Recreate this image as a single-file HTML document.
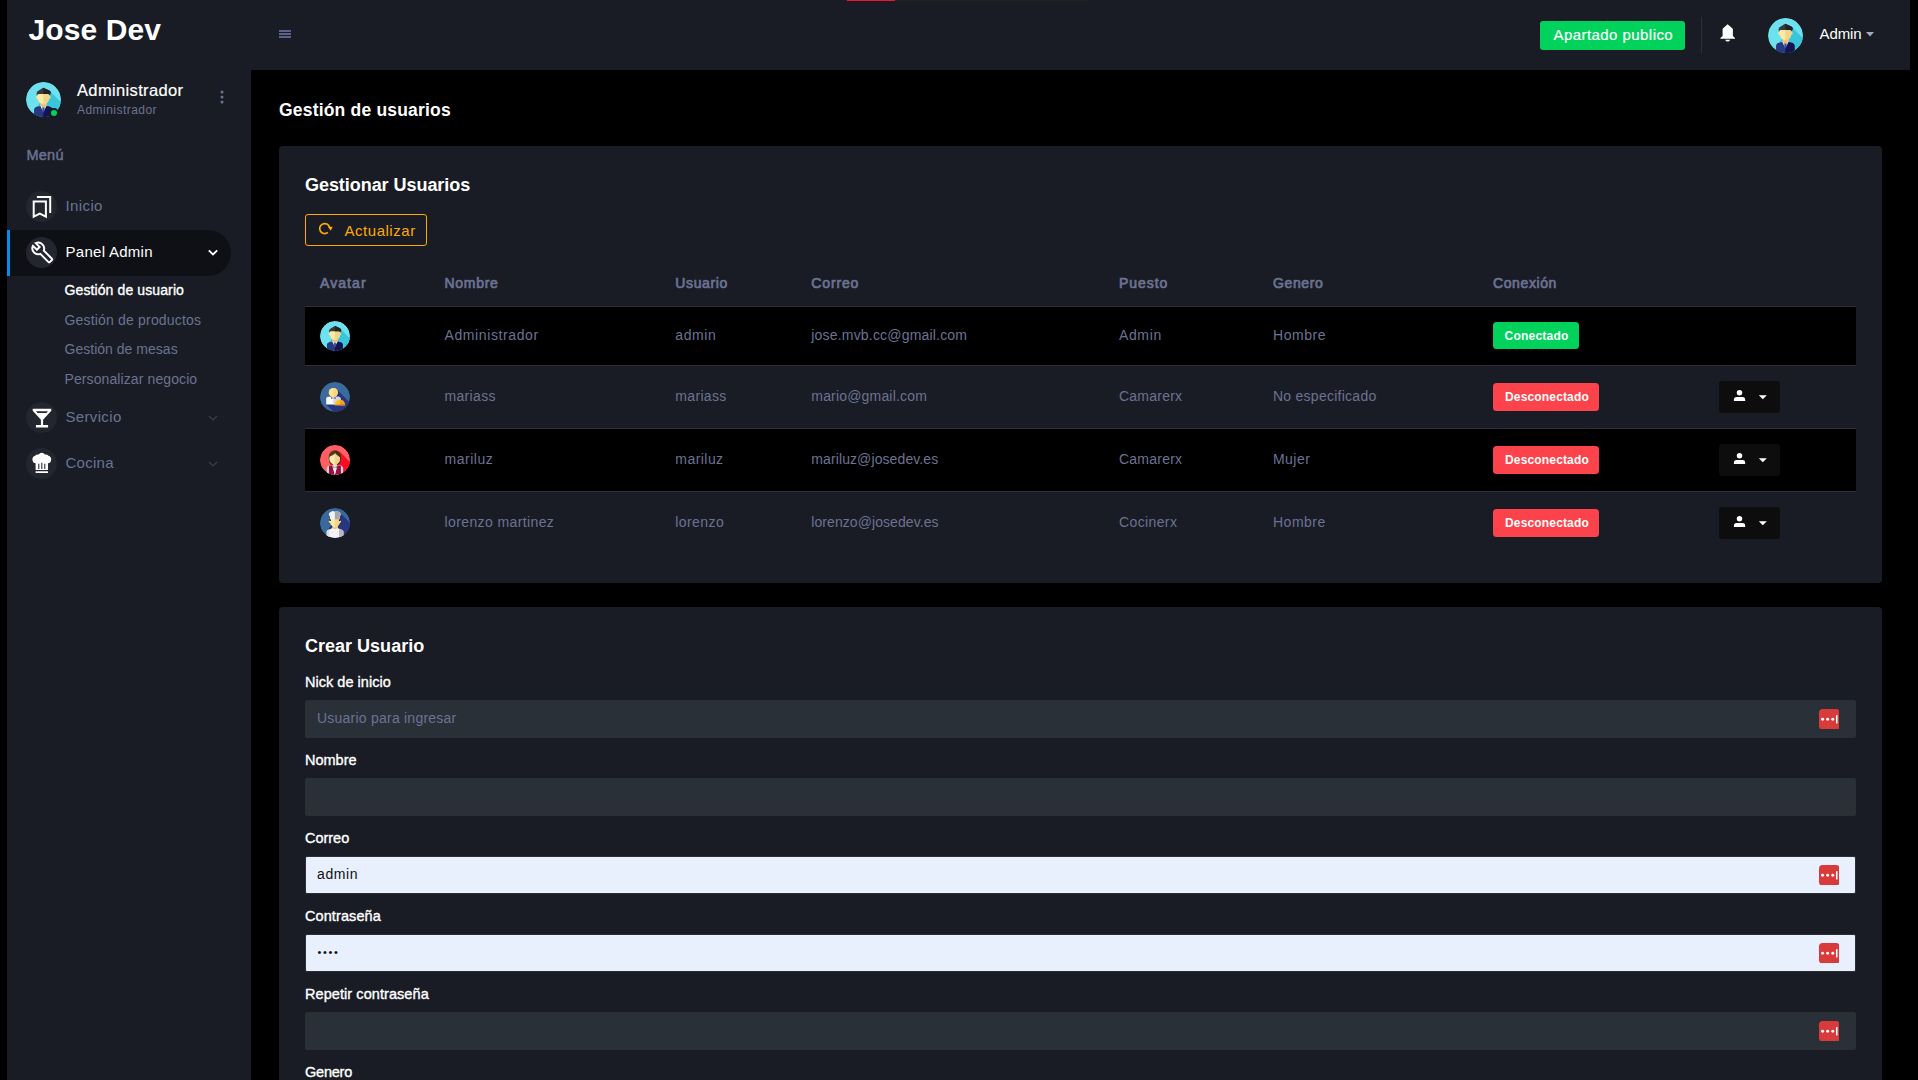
<!DOCTYPE html>
<html lang="es">
<head>
<meta charset="utf-8">
<title>Jose Dev - Gestión de usuarios</title>
<style>
*{box-sizing:border-box;margin:0;padding:0}
html,body{width:1918px;height:1080px;overflow:hidden;background:#000}
body{font-family:"Liberation Sans",sans-serif;font-size:14px;color:#fff;position:relative}
a{color:inherit;text-decoration:none}
ul{list-style:none}
.abs{position:absolute}
.t{position:absolute;white-space:nowrap;line-height:1}
.muted{color:#6c7293}
/* ---------- top progress ---------- */
#pbar{position:absolute;left:847px;top:0;width:242px;height:1px;background:#24221f;z-index:9}
#pbar i{display:block;width:48px;height:1px;background:#f0142f}
/* ---------- sidebar ---------- */
#sidebar{position:absolute;left:7px;top:0;width:244px;height:1080px;background:#191c24}
.brand{font-size:30px;font-weight:700;color:#fff}
.avatar{position:absolute;border-radius:50%;overflow:hidden}
.avatar svg{display:block;width:100%;height:100%}
.dot{position:absolute;left:42px;top:108px;width:10px;height:10px;border-radius:50%;background:#00d25b;border:2px solid #191c24}
.navtitle{font-size:14.500px;font-weight:400;color:#6c7293;-webkit-text-stroke:.45px #6c7293}
.nav-item{position:absolute;left:0;width:224px;height:46px}
.nav-item.active{background:#0f1015;border-radius:0 100px 100px 0}
.nav-item.active:before{content:"";position:absolute;left:0;top:0;width:3px;height:46px;background:#0090e7}
.nav-item .ic{position:absolute;left:19px;top:7.500px;width:31px;height:31px;border-radius:50%;background:#23252f}
.nav-item .ic svg{position:absolute;left:0;top:0;width:31px;height:31px}
.nav-item .lbl{position:absolute;left:58.500px;top:14.500px;font-size:15px;line-height:1;color:#6c7293;white-space:nowrap}
.nav-item.active .lbl{color:#fff}
.nav-item .arrow{position:absolute;left:200px;top:18.700px;width:12px;height:10px}
.sub{position:absolute;left:57.500px;font-size:14px;line-height:1;color:#6c7293;white-space:nowrap}
.sub.on{color:#fff;-webkit-text-stroke:.35px #fff}
/* ---------- navbar ---------- */
#navbar{position:absolute;left:251px;top:0;width:1659px;height:70px;background:#191c24}
.btn-public{position:absolute;left:1289px;top:21px;width:145px;height:29px;border-radius:3px;background:#00d25b;color:#fff;font-size:15px}
.btn-public span{position:absolute;left:13.500px;top:5.500px;-webkit-text-stroke:.2px #fff;line-height:1;white-space:nowrap}
.vdiv{position:absolute;left:1450px;top:17px;width:1px;height:36px;background:#2c2e33}
/* ---------- main ---------- */
#main{position:absolute;left:251px;top:70px;width:1667px;height:1010px;background:#000}
.card{position:absolute;left:28px;width:1603px;background:#191c24;border-radius:4px}
h3.page{position:absolute;left:28px;top:32px;font-size:17.500px;line-height:1;font-weight:700;white-space:nowrap}
h4.ct{position:absolute;left:26px;font-size:18px;line-height:1;font-weight:700;white-space:nowrap}
.btn-upd{position:absolute;left:26px;top:68px;width:122px;height:32px;border:1px solid #ffab00;border-radius:3px;color:#ffab00;font-size:15px}
.btn-upd span{position:absolute;left:38.500px;top:8px;line-height:1;white-space:nowrap}
.btn-upd svg{position:absolute;left:12px;top:7px;width:16px;height:14px}
/* table */
table{position:absolute;left:26px;top:114px;width:1551px;border-collapse:collapse;table-layout:fixed}
th{height:46px;text-align:left;padding:1px 0 0 15px;font-size:14px;font-weight:400;-webkit-text-stroke:.7px #6c7293;color:#6c7293;border-bottom:1px solid #2c2e33;white-space:nowrap}
td{padding:0 0 0 15px;font-size:14px;color:#6c7293;border-top:1px solid #2c2e33;white-space:nowrap;vertical-align:middle}
td.x{padding-bottom:2px}
tr.r1 td{height:59px}
tr.rn td{height:63px}
tr.odd td{background:#000}
td .av{position:relative;display:block;width:30px;height:30px;border-radius:50%;overflow:hidden}
td .av svg{display:block;width:30px;height:30px}
.badge{display:block;border-radius:3.500px;font-size:12px;font-weight:700;color:#fff;line-height:1;position:relative}
.badge b{position:absolute;top:8px;white-space:nowrap}
.badge.ok{background:#00d25b;width:86px;height:27px}
.badge.off{background:#fc424a;width:106px;height:28px}
.dd{position:relative;display:block;width:61px;height:32px;border-radius:3px;background:#0d0d0d}
.dd svg{position:absolute;left:0;top:0;width:61px;height:32px}
/* form */
label{position:absolute;left:26px;font-size:14.500px;line-height:1;color:#fff;white-space:nowrap;-webkit-text-stroke:.35px #fff}
.inp{position:absolute;left:26px;width:1551px;height:38px;border-radius:2px;background:#2a3038;border:1px solid #2c2e33;font-size:14px}
.inp.af{background:#e8f0fe;color:#111}
.inp span{position:absolute;left:11px;top:10px;line-height:1;white-space:nowrap}
.lp{position:absolute;left:1512.800px;top:7.800px;width:20.600px;height:20.600px}
/* LS-BEGIN */
#t-brand{letter-spacing:0.11px}
#t-pname{letter-spacing:0.35px}
#t-prole{letter-spacing:0.46px}
#t-menu{letter-spacing:0.24px}
#t-n1{letter-spacing:0.39px}
#t-n2{letter-spacing:0.28px}
#t-n3{letter-spacing:0.34px}
#t-n4{letter-spacing:0.26px}
#t-s1{letter-spacing:0.11px}
#t-s2{letter-spacing:0.18px}
#t-s3{letter-spacing:0.02px}
#t-s4{letter-spacing:0.10px}
#t-pub{letter-spacing:0.44px}
#t-admin{letter-spacing:-0.08px}
#t-page{letter-spacing:0.19px}
#t-c1{letter-spacing:-0.05px}
#t-upd{letter-spacing:0.53px}
#h1{letter-spacing:1.08px}
#h2{letter-spacing:0.70px}
#h3{letter-spacing:0.64px}
#h4{letter-spacing:0.86px}
#h5{letter-spacing:0.96px}
#h6{letter-spacing:0.62px}
#h7{letter-spacing:0.61px}
#a2{letter-spacing:0.60px}
#a3{letter-spacing:0.61px}
#a4{letter-spacing:0.19px}
#a5{letter-spacing:0.63px}
#a6{letter-spacing:0.54px}
#a7{letter-spacing:0.24px}
#b2{letter-spacing:0.33px}
#b3{letter-spacing:0.33px}
#b4{letter-spacing:0.18px}
#b5{letter-spacing:0.23px}
#b6{letter-spacing:0.26px}
#b7{letter-spacing:0.16px}
#c2{letter-spacing:0.53px}
#c3{letter-spacing:0.45px}
#c4{letter-spacing:0.10px}
#c5{letter-spacing:0.23px}
#c6{letter-spacing:0.45px}
#c7{letter-spacing:0.16px}
#d2{letter-spacing:0.39px}
#d3{letter-spacing:0.41px}
#d4{letter-spacing:0.07px}
#d5{letter-spacing:0.38px}
#d6{letter-spacing:0.50px}
#d7{letter-spacing:0.16px}
#t-c2{letter-spacing:0.01px}
#l1{letter-spacing:0.03px}
#t-ph{letter-spacing:0.23px}
#l3{letter-spacing:-0.02px}
#t-v1{letter-spacing:0.63px}
#l4{letter-spacing:0.09px}
#l2{letter-spacing:-0.01px}
#l5{letter-spacing:0.07px}
#l6{letter-spacing:-0.23px}
/* LS-END */
</style>
</head>
<body>
<div id="pbar"><i></i></div>

<!-- ================= SIDEBAR ================= -->
<nav id="sidebar">
  <a class="t brand" id="t-brand" style="left:21.500px;top:15px" href="#">Jose Dev</a>
  <div class="avatar" style="left:19px;top:82px;width:35px;height:35px"><svg viewBox="0 0 40 40"><use href="#av-admin"/></svg></div>
  <span class="dot"></span>
  <div class="t" id="t-pname" style="left:70px;top:81.500px;font-size:16.500px;-webkit-text-stroke:.2px #fff">Administrador</div>
  <div class="t muted" id="t-prole" style="left:70px;top:104px;font-size:12px">Administrador</div>
  <svg class="abs" style="left:212px;top:89px;width:6px;height:16px" viewBox="0 0 6 16"><circle cx="3" cy="3" r="1.500" fill="#6c7293"/><circle cx="3" cy="8" r="1.500" fill="#6c7293"/><circle cx="3" cy="13" r="1.500" fill="#6c7293"/></svg>
  <div class="t navtitle" id="t-menu" style="left:19.500px;top:147.500px">Menú</div>
  <ul>
    <li class="nav-item" style="top:183.500px"><span class="ic"><svg viewBox="0 0 31 31"><use href="#ic-bookmarks"/></svg></span><span class="lbl" id="t-n1">Inicio</span></li>
    <li class="nav-item active" style="top:229.600px"><span class="ic"><svg viewBox="0 0 31 31"><use href="#ic-wrench"/></svg></span><span class="lbl" id="t-n2">Panel Admin</span><svg class="arrow" viewBox="0 0 12 10"><path d="M1.800 2.300l4.200 4.200 4.200-4.200" fill="none" stroke="#fff" stroke-width="1.800"/></svg></li>
    <li class="nav-item" style="top:394.400px"><span class="ic"><svg viewBox="0 0 31 31"><use href="#ic-glass"/></svg></span><span class="lbl" id="t-n3">Servicio</span><svg class="arrow" viewBox="0 0 12 10"><path d="M2 3l4 4 4-4" fill="none" stroke="#3b3f52" stroke-width="1.100"/></svg></li>
    <li class="nav-item" style="top:440.300px"><span class="ic"><svg viewBox="0 0 31 31"><use href="#ic-chef"/></svg></span><span class="lbl" id="t-n4">Cocina</span><svg class="arrow" viewBox="0 0 12 10"><path d="M2 3l4 4 4-4" fill="none" stroke="#3b3f52" stroke-width="1.100"/></svg></li>
  </ul>
  <a class="sub on" id="t-s1" style="top:282.800px" href="#">Gestión de usuario</a>
  <a class="sub" id="t-s2" style="top:312.600px" href="#">Gestión de productos</a>
  <a class="sub" id="t-s3" style="top:342px" href="#">Gestión de mesas</a>
  <a class="sub" id="t-s4" style="top:371.700px" href="#">Personalizar negocio</a>
</nav>

<!-- ================= NAVBAR ================= -->
<header id="navbar">
  <svg class="abs" style="left:28px;top:30px;width:12px;height:8px" viewBox="0 0 12 8"><path d="M0 1h12M0 4h12M0 7h12" stroke="#5e6187" stroke-width="2"/></svg>
  <a class="btn-public" href="#"><span id="t-pub">Apartado publico</span></a>
  <span class="vdiv"></span>
  <svg class="abs" style="left:1468.600px;top:23.600px;width:15.400px;height:18px" preserveAspectRatio="none" viewBox="0 0 16 18"><use href="#ic-bell"/></svg>
  <div class="avatar" style="left:1517px;top:18px;width:35px;height:35px"><svg viewBox="0 0 40 40"><use href="#av-admin"/></svg></div>
  <div class="t" id="t-admin" style="left:1568.500px;top:26.200px;font-size:15px">Admin</div>
  <svg class="abs" style="left:1615px;top:32px;width:8px;height:4.500px" viewBox="0 0 8 4.500"><path d="M0 0h8l-4 4.500z" fill="#a3a8bd"/></svg>
</header>

<!-- ================= MAIN ================= -->
<main id="main">
  <h3 class="page" id="t-page">Gestión de usuarios</h3>

  <section class="card" id="card1" style="top:76px;height:437px">
    <h4 class="ct" id="t-c1" style="top:29.500px">Gestionar Usuarios</h4>
    <a class="btn-upd" href="#"><svg viewBox="0 0 16 14"><use href="#ic-refresh"/></svg><span id="t-upd">Actualizar</span></a>
    <table>
      <colgroup><col style="width:124.500px"><col style="width:230.800px"><col style="width:136px"><col style="width:307.700px"><col style="width:154px"><col style="width:220px"><col style="width:226px"><col></colgroup>
      <thead><tr><th><span id="h1">Avatar</span></th><th><span id="h2">Nombre</span></th><th><span id="h3">Usuario</span></th><th><span id="h4">Correo</span></th><th><span id="h5">Puesto</span></th><th><span id="h6">Genero</span></th><th><span id="h7">Conexión</span></th><th></th></tr></thead>
      <tbody>
        <tr class="r1 odd"><td><span class="av"><svg viewBox="0 0 40 40"><use href="#av-admin"/></svg></span></td><td class="x"><span id="a2">Administrador</span></td><td class="x"><span id="a3">admin</span></td><td class="x"><span id="a4">jose.mvb.cc@gmail.com</span></td><td class="x"><span id="a5">Admin</span></td><td class="x"><span id="a6">Hombre</span></td><td><span class="badge ok"><b id="a7" style="left:11.500px">Conectado</b></span></td><td></td></tr>
        <tr class="rn"><td><span class="av"><svg viewBox="0 0 40 40"><use href="#av-waiter"/></svg></span></td><td class="x"><span id="b2">mariass</span></td><td class="x"><span id="b3">mariass</span></td><td class="x"><span id="b4">mario@gmail.com</span></td><td class="x"><span id="b5">Camarerx</span></td><td class="x"><span id="b6">No especificado</span></td><td><span class="badge off"><b id="b7" style="left:12px">Desconectado</b></span></td><td><span class="dd"><svg viewBox="0 0 61 32"><use href="#dd-ic"/></svg></span></td></tr>
        <tr class="rn odd"><td><span class="av"><svg viewBox="0 0 40 40"><use href="#av-woman"/></svg></span></td><td class="x"><span id="c2">mariluz</span></td><td class="x"><span id="c3">mariluz</span></td><td class="x"><span id="c4">mariluz@josedev.es</span></td><td class="x"><span id="c5">Camarerx</span></td><td class="x"><span id="c6">Mujer</span></td><td><span class="badge off"><b id="c7" style="left:12px">Desconectado</b></span></td><td><span class="dd"><svg viewBox="0 0 61 32"><use href="#dd-ic"/></svg></span></td></tr>
        <tr class="rn"><td><span class="av"><svg viewBox="0 0 40 40"><use href="#av-cook"/></svg></span></td><td class="x"><span id="d2">lorenzo martinez</span></td><td class="x"><span id="d3">lorenzo</span></td><td class="x"><span id="d4">lorenzo@josedev.es</span></td><td class="x"><span id="d5">Cocinerx</span></td><td class="x"><span id="d6">Hombre</span></td><td><span class="badge off"><b id="d7" style="left:12px">Desconectado</b></span></td><td><span class="dd"><svg viewBox="0 0 61 32"><use href="#dd-ic"/></svg></span></td></tr>
      </tbody>
    </table>
  </section>

  <section class="card" id="card2" style="top:537px;height:480px;border-radius:4px 4px 0 0">
    <h4 class="ct" id="t-c2" style="top:30px">Crear Usuario</h4>
    <label id="l1" style="top:67.500px">Nick de inicio</label>
    <div class="inp" style="top:93px"><span class="muted" id="t-ph">Usuario para ingresar</span><svg class="lp" viewBox="0 0 20 20"><use href="#lp-ic"/></svg></div>
    <label id="l2" style="top:145.500px">Nombre</label>
    <div class="inp" style="top:171px"></div>
    <label id="l3" style="top:223.500px">Correo</label>
    <div class="inp af" style="top:249px"><span id="t-v1">admin</span><svg class="lp" viewBox="0 0 20 20"><use href="#lp-ic"/></svg></div>
    <label id="l4" style="top:301.500px">Contraseña</label>
    <div class="inp af" style="top:327px"><span id="t-v2" style="font-size:11px;top:11.500px;left:11.400px;letter-spacing:1.650px">••••</span><svg class="lp" viewBox="0 0 20 20"><use href="#lp-ic"/></svg></div>
    <label id="l5" style="top:379.500px">Repetir contraseña</label>
    <div class="inp" style="top:405px"><svg class="lp" viewBox="0 0 20 20"><use href="#lp-ic"/></svg></div>
    <label id="l6" style="top:457.500px">Genero</label>
  </section>
</main>

<!-- ================= SVG DEFS (icons / avatars) ================= -->
<svg width="0" height="0" style="position:absolute">
  <defs>
    <g id="lp-ic"><rect width="20" height="20" rx="3.400" fill="#d83b3a"/><circle cx="3.500" cy="10" r="1.450" fill="#fff"/><circle cx="8.400" cy="10" r="1.450" fill="#fff"/><circle cx="13.400" cy="10" r="1.450" fill="#fff"/><rect x="16.500" y="6" width="1.500" height="8" fill="#fff"/></g>
    <g id="dd-ic"><circle cx="20.500" cy="11.700" r="2.750" fill="#fff"/><path d="M14.900 20.100v-1.400a2.700 2.700 0 0 1 2.700-2.700h5.900a2.700 2.700 0 0 1 2.700 2.700v1.400z" fill="#fff"/><path d="M39.800 14.300h8l-4 3.900z" fill="#fff"/></g>
    <g id="ic-bookmarks"><path d="M7.700 10.600h12.200v15l-6.100-2.900-6.100 2.900z" fill="none" stroke="#fff" stroke-width="2" stroke-linejoin="miter"/><path d="M10.900 6h13.300v16.100" fill="none" stroke="#fff" stroke-width="2"/></g>
    <g id="ic-wrench"><path d="M22.700 19l-9.100-9.100c.9-2.300.4-5-1.500-6.900-2-2-5-2.400-7.400-1.300L9 6 6 9 1.600 4.700C.4 7.100.9 10.100 2.900 12.100c1.900 1.900 4.600 2.400 6.900 1.500l9.100 9.100c.4.400 1 .4 1.400 0l2.300-2.300c.5-.4.5-1.100.1-1.400z" fill="none" stroke="#fff" stroke-width="2.200" transform="translate(5.500 4.650) scale(.9)"/></g>
    <g id="ic-glass"><path d="M6.700 6.800h18.600v2l-8.200 9v5.300h5v2.300H9.900v-2.300h5v-5.300l-8.200-9z" fill="#fff"/><path d="M10 9.200h12l-1.600 1.800h-8.800z" fill="#23252f"/></g>
    <g id="ic-chef" transform="translate(-1.100 -1.300) scale(1.070)"><path d="M10 23h11.600v1.600H10zM10 21.800v-6.300a3.600 3.600 0 0 1-.4-7 3.200 3.200 0 0 1 3.300-1.100 3.300 3.300 0 0 1 5.800 0 3.200 3.200 0 0 1 3.300 1.100 3.600 3.600 0 0 1-.4 7v6.300z" fill="#fff"/><path d="M13 16v4.800M15.800 15v5.800M18.600 16v4.800" stroke="#23252f" stroke-width="1"/></g>
    <g id="ic-bell"><path d="M7.800.2C9.300 1.600 12.200 3 13.400 5v7.100l2.300 2v.7H.4v-.7l2.300-2V5C3.900 3 6.800 1.600 7.800.2z" fill="#fff"/><path d="M5.600 15.700h4.700c0 1.100-1 1.900-2.350 1.900s-2.350-.8-2.350-1.900z" fill="#fff"/></g>
    <g id="ic-refresh"><path d="M9.900 10.400A5 5 0 1 1 11.500 5.300" fill="none" stroke="#ffab00" stroke-width="1.700"/><path d="M10 5.100l4.700-.4-1.900 4.100z" fill="#ffab00"/></g>
    <clipPath id="rh"><rect x="19.800" y="0" width="21" height="40"/></clipPath>
    <g id="av-admin"><circle cx="20" cy="20" r="20" fill="#6de1ee"/><path d="M27.500 10.700L42 25.200V42H20L10 31z" fill="#3ac6da"/><path d="M9.200 40v-8c0-2 1.300-3.300 4.300-3.900l3-.8h6.600l3 .8c3 .6 4.300 1.900 4.300 3.900v8z" fill="#27397f"/><path d="M9.200 40v-8c0-2 1.300-3.300 4.300-3.900l3-.8h6.600l3 .8c3 .6 4.300 1.900 4.300 3.900v8z" fill="#141452" clip-path="url(#rh)"/><path d="M16 26.600l3.800 8.100 4-8.100z" fill="#e3eaf0"/><path d="M18.900 28.200h2.100l.3 4.300-1.400 2.600-1.300-2.600z" fill="#2d4fa0"/><path d="M16.700 21h6.800v5.800l-3.400 2.300-3.400-2.300z" fill="#fbd38e"/><path d="M16.700 24.800c2 1.400 4.800 1.400 6.800 0v2l-3.400 2.300-3.400-2.300z" fill="#f5b865"/><circle cx="13.100" cy="17.600" r="1.500" fill="#fee8a6"/><circle cx="26.700" cy="17.600" r="1.500" fill="#f5d488"/><path d="M13.300 12.500h13.200v5.500c0 4.200-3 7.200-6.600 7.200s-6.600-3-6.600-7.200z" fill="#fee8a6"/><path d="M13.300 12.500h13.200v5.500c0 4.200-3 7.200-6.600 7.200s-6.600-3-6.600-7.200z" fill="#f5d488" clip-path="url(#rh)"/><path d="M12.300 15C11.900 12.700 12.400 11.400 13.300 10.600L18.600 7.200Q19.800 6.300 21 7L26.700 9.700C27.800 10.400 28.300 11.300 28.300 12.300C28.300 13.400 27.600 14.200 26.700 14.600L25.600 13.800H14.300Z" fill="#3a3a3a"/><path d="M12.300 15C11.900 12.700 12.400 11.400 13.300 10.600L18.600 7.200Q19.800 6.300 21 7L26.700 9.700C27.800 10.400 28.300 11.300 28.300 12.300C28.300 13.400 27.600 14.200 26.700 14.600L25.600 13.800H14.300Z" fill="#232323" clip-path="url(#rh)"/></g>
    <g id="av-waiter"><circle cx="20" cy="20" r="20" fill="#3b6a9d"/><path d="M22 9.800L42 29.800V42H20.300L8.300 30z" fill="#27367f"/><path d="M8.300 30v-8a2.500 2.500 0 0 1 2.500-2.500h14a2.500 2.500 0 0 1 2.500 2.500v8z" fill="#fff"/><path d="M17.500 19.500h7.300a2.500 2.500 0 0 1 2.500 2.500v8h-9.800z" fill="#d5d8e0"/><circle cx="17.700" cy="14.100" r="6.070" fill="#fde598"/><path d="M17.700 8v12.200a6.070 6.070 0 0 0 0-12.200z" fill="#fdd978"/><path d="M14.700 20.400l3.100 1 3.100-1v2l-3.100-1-3.100 1z" fill="#2a2a33"/><path d="M20.200 29.800a6.400 6.300 0 0 1 12.800 0z" fill="#fdc218"/><path d="M26.600 23.500a6.400 6.300 0 0 1 6.400 6.300h-6.400z" fill="#f0a32b"/><rect x="19.700" y="29.700" width="13.800" height="1.600" fill="#f79420"/><rect x="26.600" y="29.700" width="6.900" height="1.600" fill="#f07c23"/></g>
    <g id="av-woman"><circle cx="20" cy="20" r="20" fill="#fe5f63"/><path d="M26 8.700L42 24.700V42H20L11 30z" fill="#ff0a24"/><path d="M11.700 17c0-6.500 3.300-9.700 8.100-9.700s8.100 3.200 8.100 9.700c0 4-.9 7-2.400 8.800H14.100c-1.500-1.800-2.400-4.800-2.400-8.800z" fill="#5b3a1c"/><path d="M11.700 17c0-6.500 3.300-9.700 8.100-9.700s8.100 3.200 8.100 9.700c0 4-.9 7-2.400 8.800H14.100c-1.500-1.800-2.400-4.800-2.400-8.800z" fill="#4a2d14" clip-path="url(#rh)"/><rect x="17.300" y="23.500" width="5" height="5" fill="#f7d9a0"/><path d="M17.300 25.800c1.500.9 3.500.9 5 0v1.400h-5z" fill="#f3bf72"/><ellipse cx="19.600" cy="18.400" rx="7.100" ry="7.600" fill="#feeaae"/><path d="M19.800 10.800c3.800.1 6.900 3.400 6.900 7.600s-3.100 7.500-6.900 7.600z" fill="#edd28b"/><path d="M12.300 15.500c.4-4.700 3.300-7.200 7.500-7.200 4.400 0 7.300 2.700 7.500 8-2.800-1.400-5.300-3.500-6.700-5.600-2 2.400-5.100 4.100-8.300 4.800z" fill="#5b3a1c"/><path d="M12.300 15.500c.4-4.700 3.300-7.200 7.500-7.200 4.400 0 7.300 2.700 7.500 8-2.800-1.400-5.300-3.500-6.700-5.600-2 2.400-5.100 4.100-8.300 4.800z" fill="#4a2d14" clip-path="url(#rh)"/><path d="M9.200 40v-9c0-2 1.500-3.300 4-3.700h13.600c2.500.4 4 1.700 4 3.700v9z" fill="#c9dbe0"/><path d="M12 40V28l4.500-.7 3.300 12.700 3.300-12.700 4.800.7v12z" fill="#9a0f3f"/><path d="M16.500 27.300h6.600L19.800 40z" fill="#dfeaec"/><path d="M16.700 28.300l3.100 1.100 3.100-1.100v2.500l-3.100-1.100-3.100 1.100z" fill="#6b7a85"/></g>
    <g id="av-cook"><circle cx="20" cy="20" r="20" fill="#3a6a9d"/><path d="M27 6.800L42 21.800V42H20L9 31z" fill="#27367f"/><path d="M8.900 40v-8c0-1.800 1.300-2.900 3.600-3.300l4.200-2.100h6.800l4.200 2.100c2.300.4 3.600 1.500 3.600 3.300v8z" fill="#f4f4f6"/><path d="M25.400 27.700l2.300.9c2.300.4 3.600 1.500 3.600 3.300v8h-5.900z" fill="#b9b9bd"/><path d="M8.900 40v-8c0-1.800 1.300-2.900 3.600-3.300v11.300z" fill="#dcdcdf"/><circle cx="16.600" cy="32.400" r=".6" fill="#c4c4c9"/><circle cx="23.500" cy="32.400" r=".6" fill="#c4c4c9"/><path d="M16.700 20h6.800v6.600l-3.400 1.600-3.400-1.600z" fill="#fde9a4"/><path d="M16.700 20h6.800v6.600l-3.400 1.600-3.400-1.600z" fill="#f2d686" clip-path="url(#rh)"/><path d="M16.700 25c2 1.200 4.800 1.200 6.800 0v1.600l-3.400 1.600-3.400-1.600z" fill="#f3c071"/><circle cx="13.100" cy="18" r="1.500" fill="#fde9a4"/><circle cx="26.700" cy="18" r="1.500" fill="#f2d686"/><path d="M13.400 14h13v4.300c0 3.900-2.900 6.700-6.500 6.700s-6.500-2.800-6.500-6.700z" fill="#fde9a4"/><path d="M13.400 14h13v4.300c0 3.900-2.900 6.700-6.500 6.700s-6.500-2.800-6.500-6.700z" fill="#f2d686" clip-path="url(#rh)"/><path d="M12.700 15h1.800v2.300h-1.800zM25.200 15H27v2.300h-1.800z" fill="#1f1f24"/><path d="M13.300 14.600V11c-2.200-.9-2-5.300 1.300-5.600 1-1.700 3.300-1.700 5.200-.4 1.900-1.300 4.200-1.300 5.200.4 3.300.3 3.500 4.700 1.300 5.600v3.600c-4.200 1-8.800 1-13 0z" fill="#f2f2f4"/><path d="M13.300 14.600V11c-2.200-.9-2-5.300 1.300-5.600 1-1.700 3.300-1.700 5.200-.4 1.900-1.300 4.200-1.300 5.200.4 3.300.3 3.500 4.700 1.300 5.600v3.600c-4.200 1-8.800 1-13 0z" fill="#a8a8ac" clip-path="url(#rh)"/></g>
  </defs>
</svg>

</body>
</html>
